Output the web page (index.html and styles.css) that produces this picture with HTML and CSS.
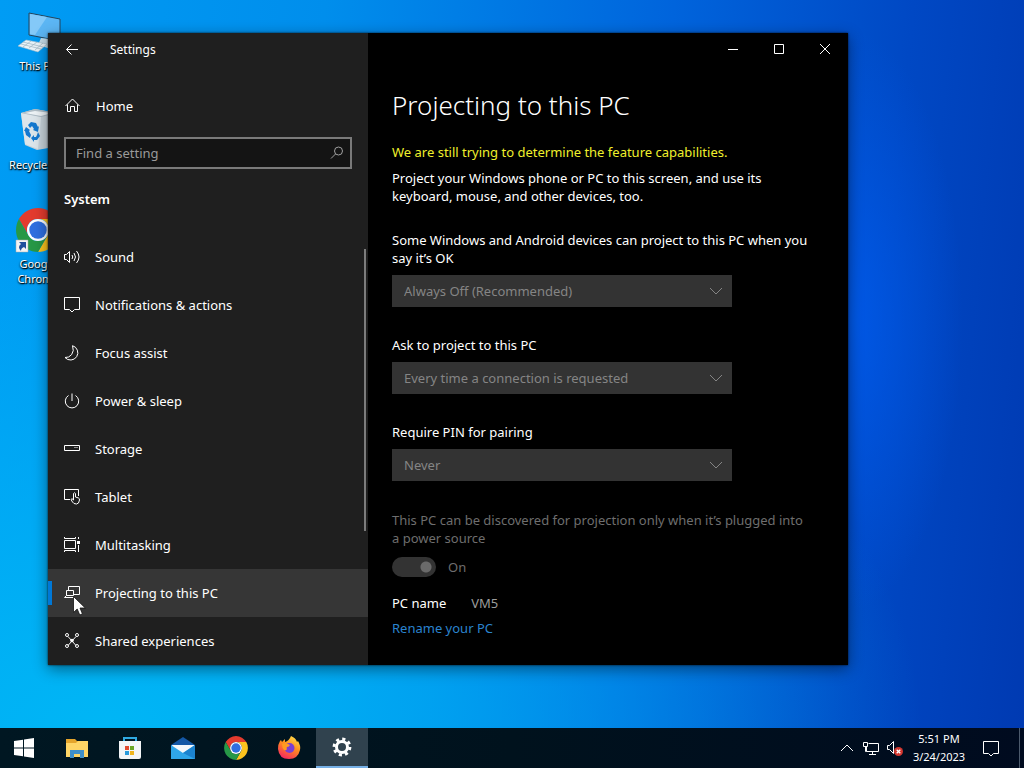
FILE: index.html
```html
<!DOCTYPE html>
<html lang="en">
<head>
    <meta charset="UTF-8">
    <meta name="viewport" content="width=device-width, initial-scale=1.0">
    <title>Settings</title>
    <link rel="stylesheet" href="styles.css">
</head>
<body>
    <svg width="0" height="0" class="defs" aria-hidden="true">
        <symbol id="chrome" viewBox="0 0 48 48">
            <path fill="#e33b2e" d="M4.95 13A22 22 0 0 1 43.05 13H24A11 11 0 0 0 14.47 29.5Z"/>
            <path fill="#fcc31e" d="M43.05 13A22 22 0 0 1 24 46L33.53 29.5A11 11 0 0 0 24 13Z"/>
            <path fill="#279847" d="M24 46A22 22 0 0 1 4.95 13L14.47 29.5A11 11 0 0 0 33.53 29.5Z"/>
            <circle cx="24" cy="24" r="11" fill="#fff"/>
            <circle cx="24" cy="24" r="8.7" fill="#2f6fe0"/>
        </symbol>
        <symbol id="chevron" viewBox="0 0 14 8">
            <path fill="none" stroke="currentColor" d="M1 1l6 6 6-6"/>
        </symbol>
    </svg>

    <div class="desktop">
        <!-- Desktop shortcuts -->
        <div class="shortcuts">
            <a href="#" class="shortcut">
                <svg width="48" height="48" viewBox="0 0 48 48">
                    <path fill="#5cb6f4" stroke="#24455c" d="M15 5l31 6v22l-31-6z"/>
                    <path fill="#84c9f8" d="M16 6l17 3-12 18-5-1z"/>
                    <path fill="#c5dce8" d="M27 30l8 1v4l8 3-6 3-13-4z"/>
                    <path fill="#eaf3f8" stroke="#a6bdc9" stroke-width=".6" d="M12 32l21 4-9 8-20-6z"/>
                    <path stroke="#9db5c2" stroke-width=".7" fill="none" d="M9 34l20 5M7 36l20 5M17 33l-8 6M23 34l-8 6M29 35l-8 7"/>
                </svg>
                <span>This PC</span>
            </a>
            <a href="#" class="shortcut">
                <svg width="48" height="48" viewBox="0 0 48 48">
                    <path fill="#c7d3da" d="M7 6l14-4 22 4-3 34-17 3-12-5z"/>
                    <path fill="#dce5ea" d="M7 6l20 4-3 32-13-5z"/>
                    <path fill="#aebdc6" d="M7 6l14-4 22 4-16 4z"/>
                    <path fill="#edf3f6" d="M11 6l10-2 17 2-11 3z"/>
                    <path fill="#1478cf" d="M14 18l3-3 5 1 2 4 1-1-1 6-5-2 1-1-2-3-2 2zM24 25l2 4-3 4-3 0v2l-3-4 3-3v2h2l1-2zM12 20l4 3-1 1 2 4-1 3-4-3-1-4-1 0z"/>
                </svg>
                <span>Recycle Bin</span>
            </a>
            <a href="#" class="shortcut">
                <svg width="48" height="48" viewBox="0 0 48 48">
                    <use href="#chrome" width="48" height="48"/>
                    <path fill="#f4f4f4" stroke="#aaa" stroke-width=".5" d="M2 34h12v12H2z"/>
                    <path fill="#1f4f9c" d="M5 36h7v7l-2-2q-3 1-3 4-4-4 0-7z"/>
                </svg>
                <span>Google<br>Chrome</span>
            </a>
        </div>

        <!-- Settings window -->
        <div class="window">
            <aside class="sidebar">
                <header class="titlebar">
                    <button class="back" aria-label="Back">
                        <svg width="16" height="16" viewBox="0 0 16 16"><path d="M14 7.500H2.500M7.500 2.500l-5 5 5 5"/></svg>
                    </button>
                    <span class="app-name">Settings</span>
                </header>
                <a href="#" class="home">
                    <svg width="16" height="16" viewBox="0 0 16 16"><path d="M1.500 8L8.500 1l7 7M3.500 6.500v7h3v-5h4v5h3v-7"/></svg>
                    Home
                </a>
                <div class="search">
                    <input type="text" placeholder="Find a setting" aria-label="Find a setting">
                    <svg width="16" height="16" viewBox="0 0 16 16"><circle cx="10.500" cy="6" r="4"/><path d="M7.500 9L3 13.500"/></svg>
                </div>
                <h2>System</h2>
                <nav>
                    <a href="#">
                        <svg width="16" height="16" viewBox="0 0 16 16"><path d="M.5 5.500h2l3-3v11l-3-3h-2zM8 6q1.500 2 0 4M10 4q3 4 0 8M12.500 2q5 6 0 12"/></svg>
                        Sound
                    </a>
                    <a href="#">
                        <svg width="16" height="16" viewBox="0 0 16 16"><path d="M.5.500h15v12h-5L8 15l-2.500-2.500h-5z"/></svg>
                        Notifications &amp; actions
                    </a>
                    <a href="#">
                        <svg width="16" height="16" viewBox="0 0 16 16"><path d="M8.500.7A7.300 7.300 0 1 1 1 12.500Q5 13 7.700 9.500T8.500.7z"/></svg>
                        Focus assist
                    </a>
                    <a href="#">
                        <svg width="16" height="16" viewBox="0 0 16 16"><path d="M4.500 2.500a6.700 6.700 0 1 0 7 0M8 .5V8"/></svg>
                        Power &amp; sleep
                    </a>
                    <a href="#">
                        <svg width="16" height="16" viewBox="0 0 16 16"><path d="M.5 4.500h15v5H.5zM10.500 6.500h1M12.500 6.500h1"/></svg>
                        Storage
                    </a>
                    <a href="#">
                        <svg width="16" height="16" viewBox="0 0 16 16"><path d="M6 10.500H.5v-10h14V7M9.500 10V4.500q1-1.500 2 0V8l3 1q1 .3 1 2-.5 4-3 4-3 0-4-2l-1.500-2.500 1-.8L9.500 11v-2"/></svg>
                        Tablet
                    </a>
                    <a href="#">
                        <svg width="16" height="16" viewBox="0 0 16 16"><path d="M.5 3.500h11v8H.5zM.5 0v1.500h11V0M.5 15v-1.500h11V15M14.500 0v2M14.500 8v7"/><path d="M13 4h3v3h-3z" class="solid"/></svg>
                        Multitasking
                    </a>
                    <a href="#" class="active">
                        <svg width="16" height="16" viewBox="0 0 16 16"><path d="M4.500 5V1.500h11v8h-6M2.500 5.500h7v5h-7zM2.500 10.500l-2 2h9"/></svg>
                        Projecting to this PC
                    </a>
                    <a href="#">
                        <svg width="16" height="16" viewBox="0 0 16 16"><path d="M4 3.500l8 9M12 3.500l-8 9"/><circle cx="3" cy="2" r="1.500"/><circle cx="13" cy="2" r="1.500"/><circle cx="3" cy="13" r="1.500"/><circle cx="13" cy="13" r="1.500"/><circle cx="8" cy="7.500" r="1.800" class="solid"/></svg>
                        Shared experiences
                    </a>
                </nav>
                <div class="scroll-thumb"></div>
            </aside>

            <main>
                <header class="window-controls">
                    <button aria-label="Minimize"><svg width="12" height="12" viewBox="0 0 12 12"><path d="M1 5.500h10"/></svg></button>
                    <button aria-label="Maximize"><svg width="12" height="12" viewBox="0 0 12 12"><path d="M1.500.500h9v9h-9z"/></svg></button>
                    <button aria-label="Close"><svg width="12" height="12" viewBox="0 0 12 12"><path d="M1 0l10 10M11 0L1 10"/></svg></button>
                </header>
                <div class="content">
                    <h1>Projecting to this PC</h1>
                    <p class="warning">We are still trying to determine the feature capabilities.</p>
                    <p class="intro">Project your Windows phone or PC to this screen, and use its keyboard, mouse, and other devices, too.</p>

                    <div class="field">
                        <label for="availability">Some Windows and Android devices can project to this PC when you say it’s OK</label>
                        <div class="select">
                            <select id="availability" disabled><option>Always Off (Recommended)</option></select>
                            <svg width="14" height="8"><use href="#chevron"/></svg>
                        </div>
                    </div>
                    <div class="field">
                        <label for="ask">Ask to project to this PC</label>
                        <div class="select">
                            <select id="ask" disabled><option>Every time a connection is requested</option></select>
                            <svg width="14" height="8"><use href="#chevron"/></svg>
                        </div>
                    </div>
                    <div class="field">
                        <label for="pin">Require PIN for pairing</label>
                        <div class="select">
                            <select id="pin" disabled><option>Never</option></select>
                            <svg width="14" height="8"><use href="#chevron"/></svg>
                        </div>
                    </div>

                    <label for="plugged" class="muted">This PC can be discovered for projection only when it’s plugged into a power source</label>
                    <div class="toggle">
                        <input type="checkbox" id="plugged" checked disabled>
                        <span>On</span>
                    </div>

                    <div class="pc-name"><span>PC name</span><span class="value">VM5</span></div>
                    <a href="#" class="rename">Rename your PC</a>
                </div>
            </main>
        </div>

        <svg class="cursor" width="13" height="20" viewBox="0 0 13 20"><path fill="#fff" stroke="#111" stroke-width=".8" d="M.5.500v16l3.700-3.500 2.600 6 2.600-1.200L7 12h5.300z"/></svg>
    </div>

    <!-- Taskbar -->
    <footer class="taskbar">
        <button class="start" aria-label="Start">
            <svg width="20" height="20" viewBox="0 0 20 20" fill="#fff"><path d="M0 3l9-1.300v7.800H0zM10 1.500L20 0v9.500H10zM0 10.500h9v7.800L0 17zM10 10.500h10V20l-10-1.500z"/></svg>
        </button>
        <button class="task" aria-label="File Explorer">
            <svg width="24" height="24" viewBox="0 0 24 24">
                <path fill="#e5a52c" d="M1 3h9l2 2h11v4H1z"/>
                <path fill="#ffd566" d="M1 7h10l2-2h10v16H1z"/>
                <path fill="#3f8fc9" d="M5 22v-8h14v8h-4v-4H9v4z"/>
            </svg>
        </button>
        <button class="task" aria-label="Microsoft Store">
            <svg width="24" height="24" viewBox="0 0 24 24">
                <path fill="none" stroke="#2fa9e2" stroke-width="2" d="M6 7V2h12v5"/>
                <path fill="#f3f5f7" d="M1 5h22v16q0 2-2 2H3q-2 0-2-2z"/>
                <path fill="#e0492f" d="M7 10h4v4H7z"/><path fill="#6aa524" d="M12 10h4v4h-4z"/>
                <path fill="#2a9bdc" d="M7 15h4v4H7z"/><path fill="#f0b51e" d="M12 15h4v4h-4z"/>
            </svg>
        </button>
        <button class="task" aria-label="Mail">
            <svg width="26" height="24" viewBox="0 0 26 24">
                <path fill="#1458a6" d="M1 9l12-8 12 8v4H1z"/>
                <path fill="#f4f8fb" d="M2 9h22v5l-11 5L3 14z"/>
                <path fill="#2fa6ea" d="M1 9l12 8 12-8v14H1z"/>
                <path fill="#1c83cf" d="M13 17l12-8v14z"/>
            </svg>
        </button>
        <button class="task" aria-label="Google Chrome">
            <svg width="26" height="26"><use href="#chrome"/></svg>
        </button>
        <button class="task" aria-label="Firefox">
            <svg width="24" height="24" viewBox="0 0 24 24">
                <defs>
                    <linearGradient id="fox" x1=".8" y1="0" x2=".3" y2="1">
                        <stop offset="0" stop-color="#ffe14a"/><stop offset=".45" stop-color="#ff8f1f"/><stop offset="1" stop-color="#f5265f"/>
                    </linearGradient>
                </defs>
                <path fill="url(#fox)" d="M14 0q5 2 6 6l1-1q3 5 2 9-2 9-11 9Q2 23 1 13q0-5 2-8l1-1 1 2 3-3v3q4-1 6-6z"/>
                <circle cx="12.500" cy="12" r="5" fill="#7a3fd3"/>
                <path fill="#ff9b22" d="M5 8q3-2 6 0l2 1q-1 2-3 2-1 1 0 2-1 2-3 1-2-2-2-6z"/>
            </svg>
        </button>
        <button class="task open" aria-label="Settings">
            <svg width="20" height="20" viewBox="0 0 20 20" fill="none" stroke="#fff">
                <circle cx="10" cy="10" r="5.500" stroke-width="3"/>
                <circle cx="10" cy="10" r="7.900" stroke-width="3" stroke-dasharray="3.100 3.100"/>
            </svg>
        </button>

        <div class="tray">
            <button aria-label="Show hidden icons"><svg width="14" height="8" class="flip"><use href="#chevron"/></svg></button>
            <button aria-label="Network">
                <svg width="16" height="16" viewBox="0 0 16 16"><path d="M5.500 3.500h10v8H3.500v-5M.5 2.500h4v4h-4zM9.500 11.500v3M6 14.500h7M2.500 6.500v5h1"/></svg>
            </button>
            <button aria-label="Volume">
                <svg width="18" height="16" viewBox="0 0 18 16"><path d="M1.500 5.500h2l4-4v12l-4-4h-2z"/><circle cx="12.500" cy="11.500" r="4.500" fill="#d2362f" stroke="none"/><path stroke-width="1.300" d="M10.700 9.700l3.600 3.600M14.300 9.700l-3.600 3.600"/></svg>
            </button>
            <button class="clock"><span>5:51 PM</span><span>3/24/2023</span></button>
            <button class="action-center" aria-label="Notifications">
                <svg width="18" height="17" viewBox="0 0 18 17"><path d="M1.500 1.500h15v12h-5L9 16l-2.500-2.500h-5z"/></svg>
            </button>
            <button class="show-desktop" aria-label="Show desktop"></button>
        </div>
    </footer>
</body>
</html>
```
FILE: styles.css
```css
* {
    margin: 0;
    padding: 0;
    box-sizing: border-box;
}

body {
    min-height: 100vh;
    display: flex;
    flex-direction: column;
    font-family: 'Noto Sans', 'Open Sans', sans-serif;
    font-size: 13px;
    line-height: 18px;
    color: #fff;
    overflow: hidden;
}

a {
    color: inherit;
    text-decoration: none;
}

button {
    display: flex;
    align-items: center;
    justify-content: center;
    background: none;
    border: none;
    font: inherit;
    color: inherit;
}

svg {
    display: block;
    flex-shrink: 0;
}

.defs {
    position: absolute;
}

/* Desktop */
.desktop {
    flex: 1;
    position: relative;
    background:
        radial-gradient(ellipse 11% 40% at 83% 44%, rgba(0, 92, 240, 0.75), rgba(0, 92, 240, 0)),
        radial-gradient(ellipse 80% 70% at 10% 100%, rgba(0, 182, 245, 1), rgba(0, 178, 245, 0.7) 40%, rgba(0, 170, 240, 0)),
        linear-gradient(95deg, #009cf4 0%, #008eec 30%, #0064dc 62%, #0048c4 84%, #003ab2 100%);
}

.shortcuts {
    display: flex;
    flex-direction: column;
    width: 76px;
    padding-top: 8px;
}

.shortcut {
    display: flex;
    flex-direction: column;
    align-items: center;
    height: 99px;
    font-size: 11px;
    line-height: 15px;
    text-align: center;
    white-space: nowrap;
    text-shadow: 0 1px 2px #000, 1px 1px 1px #000;
}

.shortcut svg {
    margin-bottom: 2px;
}

.cursor {
    position: absolute;
    top: 596px;
    left: 73px;
}

/* Settings window */
.window {
    position: absolute;
    top: 33px;
    left: 48px;
    right: 176px;
    bottom: 63px;
    display: flex;
    background: #000;
    box-shadow: 0 0 2px rgba(0, 0, 0, 0.8), 0 4px 14px rgba(0, 0, 0, 0.45);
    overflow: hidden;
}

.sidebar {
    position: relative;
    display: flex;
    flex-direction: column;
    width: 320px;
    flex-shrink: 0;
    background: #1f1f1f;
    overflow: hidden;
}

.sidebar svg,
.window-controls svg,
.tray svg {
    fill: none;
    stroke: currentColor;
}

.sidebar svg .solid {
    fill: currentColor;
    stroke: none;
}

.titlebar {
    display: flex;
    align-items: center;
    height: 34px;
    flex-shrink: 0;
}

.back {
    width: 48px;
    height: 32px;
}

.app-name {
    margin-left: 14px;
    font-size: 12px;
}

.home {
    display: flex;
    align-items: center;
    gap: 16px;
    height: 40px;
    margin-top: 19px;
    padding: 0 16px;
}

.search {
    display: flex;
    align-items: center;
    height: 32px;
    margin: 11px 16px 0;
    padding: 0 6px 0 10px;
    background: #141414;
    border: 2px solid #7a7a7a;
    color: #a0a0a0;
}

.search input {
    flex: 1;
    min-width: 0;
    background: none;
    border: none;
    outline: none;
    font: inherit;
    color: inherit;
}

.search input::placeholder {
    color: #9a9a9a;
    opacity: 1;
}

.sidebar h2 {
    margin: 21px 16px 25px;
    font-size: 13px;
    line-height: 18px;
    font-weight: 600;
}

nav {
    flex: 1;
    overflow: hidden;
}

nav a {
    position: relative;
    display: flex;
    align-items: center;
    gap: 15px;
    height: 48px;
    padding: 0 16px;
}

nav a.active {
    background: #363636;
}

nav a.active::before {
    content: '';
    position: absolute;
    left: 0;
    top: 12px;
    width: 4px;
    height: 24px;
    background: #0078d7;
}

.scroll-thumb {
    position: absolute;
    top: 216px;
    right: 2px;
    width: 2px;
    height: 282px;
    background: #7c7c7c;
}

/* Page */
main {
    flex: 1;
    min-width: 0;
}

.window-controls {
    display: flex;
    justify-content: flex-end;
}

.window-controls button {
    width: 46px;
    height: 34px;
}

.content {
    padding: 20px 24px 24px;
}

h1 {
    font-size: 26px;
    line-height: 36px;
    font-weight: 300;
}

.warning {
    margin-top: 20px;
    color: #f0f02c;
}

.intro {
    max-width: 400px;
    margin: 8px 0 26px;
}

.field {
    margin-bottom: 29px;
}

.content label {
    display: block;
    max-width: 418px;
}

.select {
    display: flex;
    align-items: center;
    max-width: 340px;
    height: 32px;
    margin-top: 8px;
    padding: 0 9px 0 12px;
    background: #333;
    color: #858585;
}

.select select {
    flex: 1;
    min-width: 0;
    appearance: none;
    background: none;
    border: none;
    font: inherit;
    color: inherit;
    opacity: 1;
}

.content .muted {
    margin-top: 30px;
    color: #6e6e6e;
}

.toggle {
    display: flex;
    align-items: center;
    gap: 12px;
    margin-top: 10px;
    color: #6e6e6e;
}

.toggle input {
    appearance: none;
    width: 44px;
    height: 20px;
    border-radius: 10px;
    background: radial-gradient(circle at 34px 10px, #6a6a6a 5px, #333 6px);
}

.pc-name {
    display: flex;
    gap: 25px;
    margin-top: 17px;
}

.pc-name .value {
    color: #9c9c9c;
}

.rename {
    display: inline-block;
    margin-top: 7px;
    color: #2b84cf;
}

/* Taskbar */
.taskbar {
    display: flex;
    height: 40px;
    background: linear-gradient(90deg, #001722, #00121d 50%, #000b1f);
}

.start {
    width: 48px;
    margin-right: 3px;
}

.task {
    width: 52px;
    margin-right: 1px;
}

.task.open {
    background: #30424e;
    border-bottom: 2px solid #76b0e6;
}

.tray {
    display: flex;
    margin-left: auto;
}

.tray button {
    width: 24px;
}

.tray .flip {
    transform: rotate(180deg);
}

.tray .clock {
    flex-direction: column;
    width: 64px;
    font-size: 11px;
}

.tray .action-center {
    width: 40px;
}

.tray .show-desktop {
    width: 5px;
    margin-left: 8px;
    border-left: 1px solid #4c5a6c;
}
```
